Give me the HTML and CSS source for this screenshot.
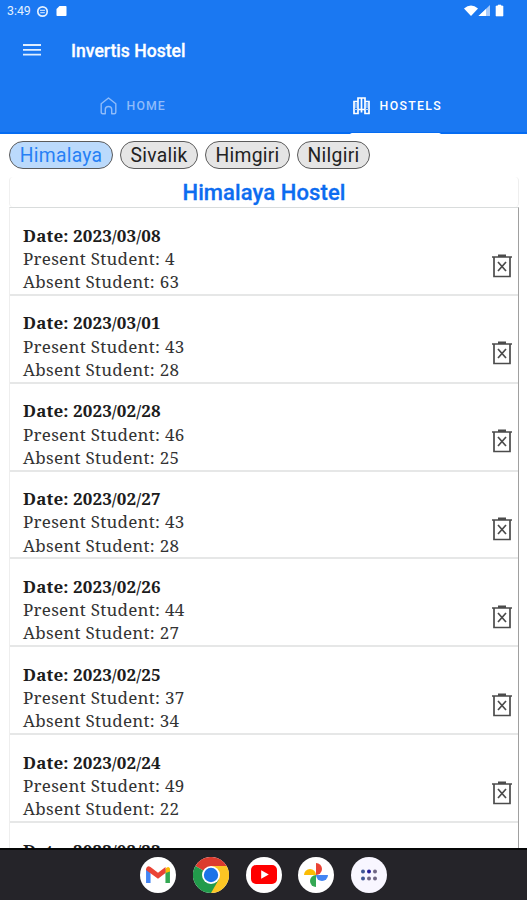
FILE: index.html
```html
<!DOCTYPE html>
<html lang="en">
<head>
  <meta charset="UTF-8" />
  <meta name="viewport" content="width=device-width, initial-scale=1.0" />
  <title>Invertis Hostel</title>
  <link rel="stylesheet" href="styles.css">
</head>
<body>
  <header class="header">
    <div class="statusbar">
      <span class="time">3:49</span>
      <svg class="status-dot" width="13" height="13" viewBox="0 0 13 13"><circle cx="6.5" cy="6.5" r="4.7" fill="none" stroke="#e3f0ff" stroke-width="1.7"/><path d="M4 5.4h5M4.2 7.7h4.6" stroke="#b9d7fd" stroke-width="1.2"/></svg>
      <svg class="status-card" width="11" height="12" viewBox="0 0 11 12"><path d="M3.5 1h6.2q.8 0 .8.8v8.400q0 .8-.8.8H1.300q-.8 0-.8-.8V4z" fill="#fff"/></svg>
      <svg class="status-right" width="42" height="14" viewBox="0 0 42 14"><path d="M0 4.500Q7-1.500 14 4.500L7 12z" fill="#fff"/><path d="M14.500 12L26 1v11z" fill="#a9cbfb"/><path d="M14.500 12L22 5v7z" fill="#fff"/><path d="M32 2h2V1h3v1h2v10h-7z" fill="#fff" stroke="#fff" stroke-width="0.600" stroke-linejoin="round"/></svg>
    </div>
    <div class="toolbar">
      <svg width="18" height="12" viewBox="0 0 18 12"><path d="M0 1h18M0 5.800h18M0 10.700h18" stroke="#e0eeff" stroke-width="1.800"/></svg>
      <h1>Invertis Hostel</h1>
    </div>
    <nav class="tabs">
      <a class="tab">
        <svg width="17" height="18" viewBox="0 0 17 18"><path d="M1.200 6.700L8.500 1l7.300 5.700v8.500q0 1.500-1.500 1.500h-2.600v-4.200q0-3-3.200-3t-3.200 3v4.200H2.700q-1.500 0-1.500-1.500z" fill="none" stroke="#8fbcfa" stroke-width="1.400" stroke-linejoin="round"/></svg>
        <span>HOME</span>
      </a>
      <a class="tab active">
        <svg width="17" height="18" viewBox="0 0 17 18"><path d="M5 12.500V1h7v11.500M8.500 1v12M5 4.500h-4v12h4v-4h7v4h4v-12h-4M8.500 12.500v3" fill="none" stroke="#fff" stroke-width="1.700"/><path d="M1 12.500h4M12 12.500h4M3 6v5M14 6v5" stroke="#b9d7fd" stroke-width="1.100"/></svg>
        <span>HOSTELS</span>
      </a>
    </nav>
  </header>

  <main>
    <div class="chips">
      <button class="chip selected">Himalaya</button>
      <button class="chip sivalik">Sivalik</button>
      <button class="chip himgiri">Himgiri</button>
      <button class="chip nilgiri">Nilgiri</button>
    </div>
    <h2>Himalaya Hostel</h2>
    <div class="list" id="list"></div>
  </main>

  <footer class="dock">
    <div class="app">
      <svg width="24" height="18" viewBox="0 0 24 18"><path d="M2.300 17V3" stroke="#4285f4" stroke-width="4.500"/><path d="M21.700 17V3" stroke="#34a853" stroke-width="4.500"/><path d="M19.500 7V2.500q3-3 4.500 0v3z" fill="#fbbc04"/><path d="M0 3Q1-1 4.500 1L12 6.800 19.500 1v6L12 12.700 0 4z" fill="#ea4335"/></svg>
    </div>
    <div class="app">
      <svg width="36" height="36" viewBox="0 0 36 36"><path d="M18 18L2.400 9A18 18 0 0 1 33.600 9z" fill="#dc3b2e"/><path d="M18 18L33.600 9A18 18 0 0 1 18 36z" fill="#fcc624"/><path d="M18 18L18 36A18 18 0 0 1 2.400 9z" fill="#229b4b"/><path d="M18 9h15.600l-7.800 13.500z" fill="#fcc624"/><path d="M25.800 22.500L18 36l-7.800-13.500z" fill="#229b4b"/><circle cx="18" cy="18" r="9" fill="#fff"/><circle cx="18" cy="18" r="7.200" fill="#1b73e8"/></svg>
    </div>
    <div class="app">
      <svg width="26" height="19" viewBox="0 0 26 19"><rect width="26" height="19" rx="5" fill="#f00"/><path d="M10.200 5.200l7.600 4.300-7.600 4.300z" fill="#fff"/></svg>
    </div>
    <div class="app">
      <svg width="26" height="26" viewBox="0 0 26 26"><path d="M13 13V1a6 6 0 0 1 0 12" fill="#ea4335"/><path d="M13 13h12a6 6 0 0 1-12 0" fill="#4285f4"/><path d="M13 13v12a6 6 0 0 1 0-12" fill="#34a853"/><path d="M13 13H1a6 6 0 0 1 12 0" fill="#fbbc04"/></svg>
    </div>
    <div class="app apps">
      <svg width="18" height="12" viewBox="0 0 18 12"><g fill="#3f5795"><circle cx="3" cy="2.500" r="2"/><circle cx="3" cy="9.500" r="2"/></g><g fill="#25209a"><circle cx="9" cy="2.500" r="2"/></g><g fill="#6f6683"><circle cx="15" cy="2.500" r="2"/><circle cx="9" cy="9.500" r="2"/><circle cx="15" cy="9.500" r="2"/></g></svg>
    </div>
  </footer>

  <script src="script.js"></script>
</body>
</html>
```
FILE: styles.css
```css
* {
  box-sizing: border-box;
}

body {
  margin: 0;
  height: 900px;
  overflow: hidden;
  display: flex;
  flex-direction: column;
  background: #fff;
  font-family: Roboto, sans-serif;
}

.header {
  height: 134px;
  flex-shrink: 0;
  background: #1a78f2;
  color: #fff;
  border-bottom: 2px solid #056cf2;
}

.statusbar {
  height: 22px;
  display: flex;
  align-items: center;
  padding: 0 21px 0 7px;
}

.time {
  width: 29px;
  font-size: 12.3px;
  color: #e3f0ff;
}

.status-card {
  margin-left: 7px;
}

.status-right {
  margin-left: auto;
}

.toolbar {
  height: 56px;
  display: flex;
  align-items: center;
  padding-left: 23px;
}

.toolbar h1 {
  margin: 2px 0 0 30px;
  font-size: 17.6px;
  font-weight: 500;
  -webkit-text-stroke: 0.3px #fff;
}

.tabs {
  height: 56px;
  display: flex;
}

.tab {
  flex: 1 1 0;
  display: flex;
  align-items: center;
  justify-content: center;
  gap: 10px;
  padding-left: 3px;
  color: #8fbcfa;
  font-size: 12.3px;
  font-weight: 500;
  letter-spacing: 1.1px;
}

.tab.active {
  position: relative;
  padding-left: 5px;
  color: #fff;
  letter-spacing: 1.3px;
}

.tab.active::after {
  content: "";
  position: absolute;
  right: 86px;
  width: 91px;
  bottom: -2px;
  height: 3px;
  border-radius: 2px 2px 0 0;
  background: #fff;
}

main {
  flex: 1;
  min-height: 0;
  overflow: hidden;
  padding: 7px 8px 0 9px;
}

.chips {
  display: flex;
  gap: 7px;
}

.chip {
  width: 85px;
  height: 28px;
  padding: 0;
  border: 1px solid #5b5b5b;
  border-radius: 15px;
  background: #e5e5e5;
  color: #222;
  font-family: Roboto, sans-serif;
  font-size: 19.3px;
  letter-spacing: 0.3px;
}

.chip.selected {
  width: 104px;
  background: #bbdafc;
  color: #2680f5;
}

.chip.sivalik {
  width: 78px;
}

.chip.nilgiri {
  width: 73px;
}

h2 {
  margin: 8px 0 0;
  height: 30px;
  line-height: 31px;
  text-align: center;
  color: #0d6cf0;
  font-size: 22px;
  letter-spacing: 0.1px;
  font-weight: 500;
  -webkit-text-stroke: 0.3px #0d6cf0;
  border-left: 1px solid #f0f0f0;
  border-right: 1px solid #eee;
  border-radius: 4px;
}

.list {
  border-left: 1px solid #eee;
  border-right: 1px solid #a0a0a0;
  border-top: 1px solid #d9dcdc;
}

.record {
  height: 87.860px;
  padding: 15.600px 5px 0 13px;
  border-bottom: 2px solid #e6e7e7;
  display: flex;
  justify-content: space-between;
  font-family: "Noto Serif", "DejaVu Serif Condensed", "DejaVu Serif", serif;
  font-size: 17px;
  line-height: 23.200px;
  color: #333;
}

.record p {
  margin: 0;
  white-space: nowrap;
}

.record .date {
  font-weight: bold;
  letter-spacing: 0.1px;
  color: #1c1c1c;
}

.record .count {
  letter-spacing: 0.270px;
}

.trash {
  margin-top: 30px;
}

.dock {
  height: 52px;
  flex-shrink: 0;
  display: flex;
  justify-content: center;
  align-items: center;
  gap: 16.600px;
  padding-bottom: 1px;
  background: #252429;
  border-top: 2px solid #050607;
}

.app {
  width: 36px;
  height: 36px;
  border-radius: 50%;
  background: #fff;
  display: flex;
  align-items: center;
  justify-content: center;
}

.app.apps {
  background: #f8f6ff;
}
```
FILE: script.js
```js
const records = [
  ["2023/03/08", 4, 63],
  ["2023/03/01", 43, 28],
  ["2023/02/28", 46, 25],
  ["2023/02/27", 43, 28],
  ["2023/02/26", 44, 27],
  ["2023/02/25", 37, 34],
  ["2023/02/24", 49, 22]
];

const trash = `<svg class="trash" width="22" height="24" viewBox="0 0 22 24"><path d="M1 3h20M7 1.300h8M3 3v19.500h16V3M7 8l8 9M15 8l-8 9" fill="none" stroke="#4b4b4b" stroke-width="1.700"/></svg>`;

document.getElementById("list").innerHTML = records.map(([date, present, absent]) => `
  <div class="record">
    <div>
      <p class="date">Date: ${date}</p>
      <p class="count">Present Student: ${present}</p>
      <p class="count">Absent Student: ${absent}</p>
    </div>
    ${trash}
  </div>`).join("") + `
  <div class="record">
    <p class="date">Date: 2023/02/23</p>
  </div>`;
```
